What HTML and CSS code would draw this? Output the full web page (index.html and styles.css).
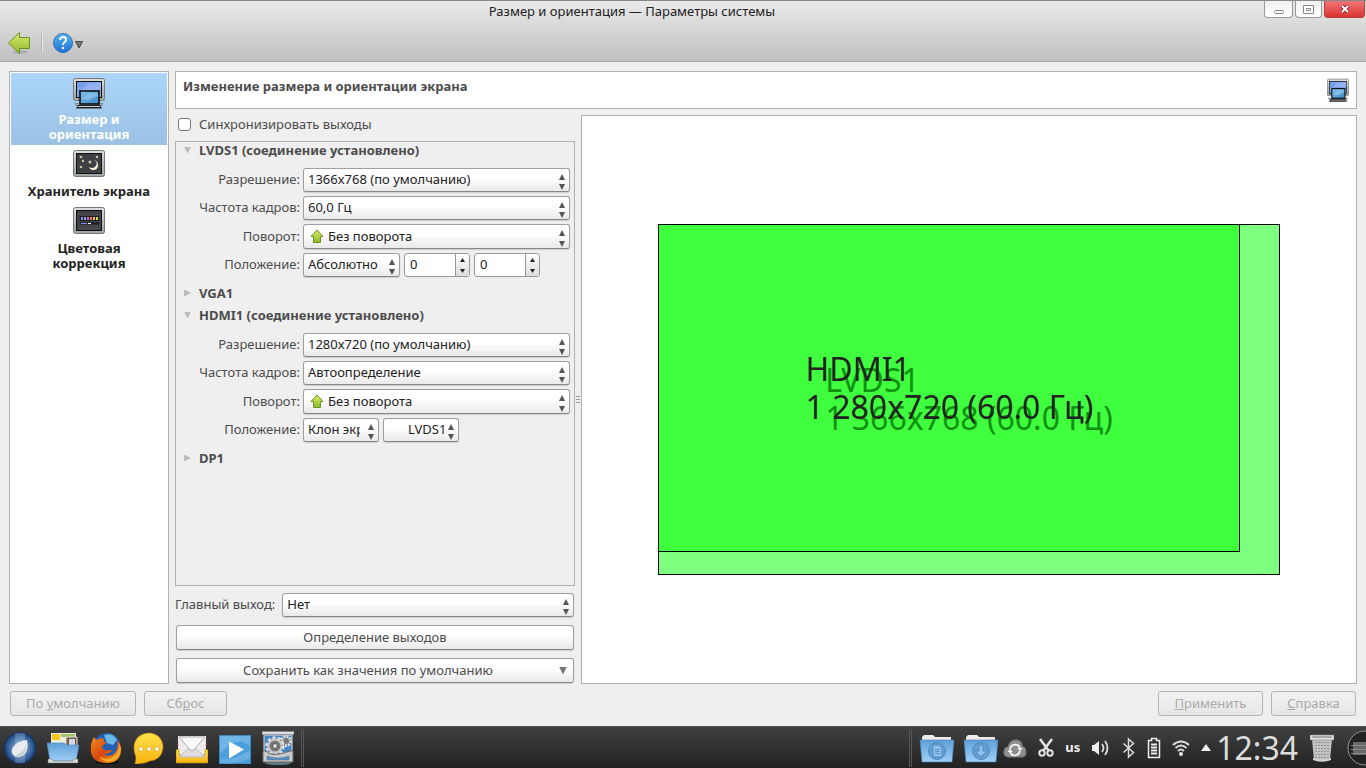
FILE: index.html
```html
<!DOCTYPE html>
<html lang="ru">

<head>
    <meta charset="utf-8">
    <title>Размер и ориентация — Параметры системы</title>
    <link rel="stylesheet" href="styles.css">
</head>

<body>

    <svg class="defs" aria-hidden="true">
        <defs>
            <linearGradient id="silver" x2="0" y2="1">
                <stop offset="0" stop-color="#dcdfdd" />
                <stop offset="1" stop-color="#9ea2a0" />
            </linearGradient>
            <linearGradient id="screen" x2="1" y2="1">
                <stop offset="0" stop-color="#6f9de9" />
                <stop offset="1" stop-color="#8fb4f4" />
            </linearGradient>
            <linearGradient id="screen2" x2="1" y2="1">
                <stop offset="0" stop-color="#7fc1ee" />
                <stop offset="1" stop-color="#3f86c4" />
            </linearGradient>
            <linearGradient id="green" x2="0" y2="1">
                <stop offset="0" stop-color="#dcec70" />
                <stop offset="1" stop-color="#8fb72c" />
            </linearGradient>
            <linearGradient id="blue" x2="0" y2="1">
                <stop offset="0" stop-color="#5f9fd6" />
                <stop offset="1" stop-color="#a0d0f8" />
            </linearGradient>
            <linearGradient id="help" x2="0" y2="1">
                <stop offset="0" stop-color="#58b7ee" />
                <stop offset="1" stop-color="#1f6fd4" />
            </linearGradient>
            <linearGradient id="yellow" x2="0" y2="1">
                <stop offset="0" stop-color="#ffe14a" />
                <stop offset="1" stop-color="#f7b211" />
            </linearGradient>
            <linearGradient id="fox" x2="1" y2="1">
                <stop offset="0" stop-color="#f58a1c" />
                <stop offset=".5" stop-color="#d9480f" />
                <stop offset="1" stop-color="#f9a51e" />
            </linearGradient>
            <radialGradient id="orb">
                <stop offset="0" stop-color="#8eb1d8" />
                <stop offset=".6" stop-color="#4d78ad" />
                <stop offset="1" stop-color="#16407a" />
            </radialGradient>
            <symbol id="display" viewBox="0 0 32 32">
                <rect x=".5" y="1.500" width="31" height="22" rx="2" fill="url(#silver)" stroke="#777" />
                <rect x="3.500" y="4.500" width="25" height="16" fill="url(#screen)" stroke="#111" />
                <path d="M5 17L15 6H28V12z" fill="#a9b9f4" opacity=".5" />
                <path d="M2 26.500h28l-1 2H3z" fill="#aaa" stroke="#555" stroke-width=".5" />
                <rect x="7" y="14" width="19" height="13" fill="url(#screen2)" stroke="#111" stroke-width="1.600" />
                <path d="M8 22l8-6h9v3l-9 4z" fill="#9ad6f6" opacity=".5" />
                <path d="M5 28h22l2 3.500H3z" fill="#222" />
                <path d="M5 29.500h22" stroke="#ccc" />
            </symbol>
            <symbol id="up-arrow" viewBox="0 0 14 15">
                <path d="M7 1l6 6.500h-2.500v6h-7v-6H1z" fill="url(#green)" stroke="#689522" stroke-linejoin="round" />
            </symbol>
            <symbol id="folder" viewBox="0 0 36 32">
                <path d="M3 9V5l2-2h9l2 2h16v6H3z" fill="#eeebe9" />
                <path d="M1 8h34l-2 22H3z" fill="url(#blue)" stroke="#4380b5" stroke-width=".6" />
                <circle cx="18" cy="19" r="8.500" fill="#659fd0" stroke="#4f8bc0" />
            </symbol>
        </defs>
    </svg>

    <div class="window">
        <header class="window-head">
            <div class="titlebar">
                <div class="title">Размер и ориентация — Параметры системы</div>
                <div class="window-buttons">
                    <button class="wb-min" aria-label="Свернуть"><svg width="10" height="4" viewBox="0 0 10 4"><rect x=".5" y=".5" width="9" height="3" rx="1" fill="#fff" stroke="#888" /></svg></button>
                    <button class="wb-max" aria-label="Развернуть"><svg width="11" height="9" viewBox="0 0 11 9"><path d="M.5.500h10v8H.5zM3.500 3.500h4v2h-4z" fill="#fff" stroke="#888" /></svg></button>
                    <button class="wb-close" aria-label="Закрыть"><svg width="10" height="10" viewBox="0 0 10 10"><path d="M2 2l6 6M8 2L2 8" stroke="#8e2626" stroke-width="4" /><path d="M2 2l6 6M8 2L2 8" stroke="#fff" stroke-width="2" /></svg></button>
                </div>
            </div>
            <div class="toolbar">
                <button aria-label="Назад">
                    <svg width="24" height="24" viewBox="0 0 24 24"><ellipse cx="13" cy="21" rx="8" ry="2" fill="#999" opacity=".5" /><path d="M1.500 12L12.500 1.500V6.500H22.500V17.500H12.500V22.500z" fill="url(#green)" stroke="#689522" stroke-linejoin="round" /></svg>
                </button>
                <span class="toolbar-sep"></span>
                <button class="help" aria-label="Справка">
                    <svg width="20" height="20" viewBox="0 0 20 20"><circle cx="10" cy="10" r="9.500" fill="url(#help)" stroke="#2c70b4" /><path d="M7 7q.3-3 3.200-3 2.900.2 2.800 2.700 0 1.700-1.700 2.700-1.300.9-1.300 2.600" fill="none" stroke="#fff" stroke-width="1.800" /><circle cx="10" cy="15" r="1.300" fill="#fff" /></svg>
                    <svg class="drop" width="8" height="8" viewBox="0 0 8 8"><path d="M.5.500h7L4 7z" fill="#777" stroke="#444" /></svg>
                </button>
            </div>
        </header>

        <main class="content">
            <nav class="sidebar">
                <a href="#size" class="active">
                    <svg width="32" height="32"><use href="#display" /></svg>
                    Размер и ориентация
                </a>
                <a href="#saver">
                    <svg width="32" height="32" viewBox="0 0 32 32">
                        <rect x=".5" y="1.500" width="31" height="26" rx="2" fill="url(#silver)" stroke="#777" />
                        <rect x="3.500" y="4.500" width="25" height="20" fill="#3e4044" stroke="#111" />
                        <path d="M21 11q5 3 1 7-3 2-6 0 1 3 4 3 5 0 5-5 0-4-4-5z" fill="#fdf8e0" />
                        <g fill="#c9c4a4"><circle cx="8" cy="8" r="1.300" /><circle cx="24" cy="8" r="1.300" /><circle cx="10" cy="12" r="1.200" /><circle cx="17" cy="13" r="1.500" /><circle cx="8" cy="18" r="1.300" /></g>
                    </svg>
                    Хранитель экрана
                </a>
                <a href="#gamma">
                    <svg width="32" height="32" viewBox="0 0 32 32">
                        <rect x=".5" y="1.500" width="31" height="26" rx="2" fill="url(#silver)" stroke="#777" />
                        <rect x="3.500" y="4.500" width="25" height="20" fill="#3e4044" stroke="#111" />
                        <path d="M5 8h22M5 20h22M5 22.500h22" stroke="#55575c" stroke-dasharray="2 1" />
                        <path d="M7 10h19v5H7z" fill="#1c1c20" />
                        <path d="M8 11h2v3H8z" fill="#8a8ff0" /><path d="M11 11h2v3h-2z" fill="#8ad" /><path d="M14 11h2v3h-2z" fill="#c86fe6" /><path d="M17 11h2v3h-2z" fill="#f58138" /><path d="M20 11h2v3h-2z" fill="#fb3" /><path d="M23 11h2v3h-2z" fill="#cde04a" />
                        <path d="M7 17.500h19" stroke="#18181b" stroke-width="2" /><path d="M8 17.500h6" stroke="#88f" /><path d="M15 17.500h3" stroke="#fff" />
                    </svg>
                    Цветовая коррекция
                </a>
            </nav>

            <div class="page">
                <div class="page-head">
                    <h1>Изменение размера и ориентации экрана</h1>
                    <svg width="22" height="24" viewBox="0 0 32 32" preserveAspectRatio="none"><use href="#display" width="32" height="32" /></svg>
                </div>

                <div class="page-body">
                    <form class="settings">
                        <label class="sync"><input type="checkbox"> Синхронизировать выходы</label>

                        <div class="outputs">
                            <section>
                                <h2 class="open">LVDS1 (соединение установлено)</h2>
                                <div class="output-form">
                                    <label for="lvds-res">Разрешение:</label>
                                    <div class="combo"><select id="lvds-res"><option>1366x768 (по умолчанию)</option></select></div>
                                    <label for="lvds-rate">Частота кадров:</label>
                                    <div class="combo"><select id="lvds-rate"><option>60,0 Гц</option></select></div>
                                    <label for="lvds-rot">Поворот:</label>
                                    <div class="combo rotation"><select id="lvds-rot"><option>Без поворота</option></select><svg width="14" height="15"><use href="#up-arrow" /></svg></div>
                                    <label for="lvds-pos">Положение:</label>
                                    <div class="position">
                                        <div class="combo absolute"><select id="lvds-pos"><option>Абсолютно</option></select></div>
                                        <div class="spin"><input type="text" value="0" aria-label="X"><button type="button" aria-label="Изменить X"></button></div>
                                        <div class="spin"><input type="text" value="0" aria-label="Y"><button type="button" aria-label="Изменить Y"></button></div>
                                    </div>
                                </div>
                            </section>
                            <section>
                                <h2>VGA1</h2>
                            </section>
                            <section>
                                <h2 class="open">HDMI1 (соединение установлено)</h2>
                                <div class="output-form">
                                    <label for="hdmi-res">Разрешение:</label>
                                    <div class="combo"><select id="hdmi-res"><option>1280x720 (по умолчанию)</option></select></div>
                                    <label for="hdmi-rate">Частота кадров:</label>
                                    <div class="combo"><select id="hdmi-rate"><option>Автоопределение</option></select></div>
                                    <label for="hdmi-rot">Поворот:</label>
                                    <div class="combo rotation"><select id="hdmi-rot"><option>Без поворота</option></select><svg width="14" height="15"><use href="#up-arrow" /></svg></div>
                                    <label for="hdmi-pos">Положение:</label>
                                    <div class="position">
                                        <div class="combo clone"><select id="hdmi-pos"><option>Клон экрана</option></select></div>
                                        <div class="combo clone source"><select aria-label="Исходный экран"><option>LVDS1</option></select></div>
                                    </div>
                                </div>
                            </section>
                            <section>
                                <h2>DP1</h2>
                            </section>
                        </div>

                        <div class="primary">
                            <label for="primary">Главный выход:</label>
                            <div class="combo"><select id="primary"><option>Нет</option></select></div>
                        </div>
                        <button type="button" class="btn">Определение выходов</button>
                        <button type="button" class="btn btn-menu"><span>Сохранить как значения по умолчанию</span></button>
                    </form>

                    <div class="splitter"></div>

                    <div class="preview">
                        <div class="screen">
                            <div>LVDS1<br>1 366x768 (60.0 Гц)</div>
                            <div class="screen screen-clone">
                                <div>HDMI1<br>1 280x720 (60.0 Гц)</div>
                            </div>
                        </div>
                    </div>
                </div>
            </div>
        </main>

        <footer class="actions">
            <button class="btn defaults" disabled>По <u>у</u>молчанию</button>
            <button class="btn reset" disabled>Сб<u>р</u>ос</button>
            <span class="spacer"></span>
            <button class="btn apply" disabled><u>П</u>рименить</button>
            <button class="btn reference" disabled><u>С</u>правка</button>
        </footer>
    </div>

    <div class="panel">
        <div class="launchers">
            <!-- menu -->
            <svg width="32" height="32" viewBox="0 0 32 32"><circle cx="16" cy="16" r="15.500" fill="url(#orb)" stroke="#123463" /><path d="M11 1h10v30H11z" fill="#c9dcf2" opacity=".25" /><path d="M23 8q2 9-2 14-5 5-11 2-4-4-1-9 4-6 14-7z" fill="#e9ecee" /><path d="M22 13q-3 8-12 11 6 2 10-2 3-4 2-9z" fill="#cdd2d8" /></svg>
            <!-- files -->
            <svg width="32" height="32" viewBox="0 0 32 32"><path d="M4 1h25v12H4z" fill="#e9efd9" /><path d="M5 2h8v6H5z" fill="#f6c61d" /><path d="M14 2h14v3H14z" fill="#9fc46a" /><path d="M19 5h11v10H19z" fill="#7c5a45" stroke="#ddd" /><path d="M22 7h6v7h-6z" fill="#ccd7e3" /><path d="M0 11h17l3 2h12l-3 16H3z" fill="url(#blue)" stroke="#4b8ecb" stroke-width=".6" /><path d="M1 27h5v2h20v-2h5v4H1z" fill="#d5d7d8" stroke="#777" stroke-width=".5" /></svg>
            <!-- browser -->
            <svg width="32" height="32" viewBox="0 0 32 32"><ellipse cx="17" cy="30" rx="12" ry="2" fill="#111" /><circle cx="17" cy="14" r="13" fill="#2460ad" /><path d="M14 3q9-3 13 5l-4 5-6-2z" fill="#67b9e8" /><path d="M4 5q1 2 3 3 4-3 7-1-1 3 3 4-4 1-5 4 1 4 6 3 4 0 4 1-4 4-9 3 6 4 12-1 4-5 2-13 5 5 4 12-2 11-14 11Q3 31 1 20 0 11 4 5z" fill="url(#fox)" /><path d="M28 8q4 12-7 18-7 2-12-2 5 8 14 5 8-4 8-13z" fill="#fbb92b" opacity=".8" /></svg>
            <!-- chat -->
            <svg width="32" height="32" viewBox="0 0 32 32"><path d="M16 1q13 1 14 14-1 13-14 14-2 2-14 3 1-2 1-7Q1 20 1 15 2 2 16 1z" fill="url(#yellow)" stroke="#e3a010" stroke-width=".6" /><g fill="#fff" stroke="#d9a01a" stroke-width=".8"><circle cx="8" cy="17" r="2.300" /><circle cx="16" cy="17" r="2.300" /><circle cx="24" cy="17" r="2.300" /></g></svg>
            <!-- mail -->
            <svg width="32" height="32" viewBox="0 0 32 32"><path d="M2 4h28v20H2z" fill="#ededee" /><path d="M2 14v-5M30 14v-5" stroke="#d66" stroke-dasharray="2 2" /><path d="M0 18l3-1v6h26v-6l3 1v13H0z" fill="url(#yellow)" stroke="#b98817" stroke-width=".6" /><path d="M3 25l10-9h6l10 9z" fill="#dedede" stroke="#bbb" /><path d="M3 5l11 13q2 2 4 0L29 5z" fill="#fafafa" stroke="#aaa" /></svg>
            <!-- player -->
            <svg width="32" height="32" viewBox="0 0 32 32"><rect x=".5" y="3.500" width="31" height="28" fill="#4ba0dc" stroke="#3a89c2" /><path d="M1 4h30v10Q18 2 1 22z" fill="#91caee" opacity=".5" /><path d="M1 27q14 2 30-9v8Q18 33 1 31z" fill="#85c0e7" opacity=".5" /><path d="M10 9.500l15 8-15 9z" fill="#fff" /></svg>
            <!-- settings -->
            <svg class="running" width="32" height="34" viewBox="0 0 32 34"><ellipse cx="16" cy="32" rx="13" ry="2" fill="#7fb8b8" opacity=".6" /><path d="M2 4h28v18H2z" fill="#4586c9" stroke="#ddd" /><path d="M0 .5h32v3H0z" fill="#ddd" stroke="#888" stroke-width=".6" /><circle cx="24" cy="10" r="4.500" fill="#777" stroke="#ddd" stroke-width="3" stroke-dasharray="2 1" /><circle cx="13" cy="15" r="8" fill="#999" stroke="#ddd" stroke-width="3.500" stroke-dasharray="3 2" /><circle cx="13" cy="15" r="6.500" fill="#777" stroke="#ccc" stroke-width="2" /><circle cx="13" cy="15" r="2.500" fill="#ddd" stroke="#555" /><path d="M1 20h3q5 7 24 0h3v11H1z" fill="#c8cacb" stroke="#666" /><path d="M5 25q11 4 22 0v4H5z" fill="#4d8dce" stroke="#777" stroke-width=".6" /></svg>
        </div>
        <span class="panel-sep"></span>
        <span class="spacer"></span>
        <span class="panel-sep"></span>

        <div class="folders">
            <svg width="36" height="32" viewBox="0 0 36 32"><use href="#folder" /><path d="M14 13h6l3 3v9h-9z" fill="#8fc2ea" stroke="#4f8bc0" /><path d="M16 17.500h5M16 19.500h5M16 21.500h5" stroke="#5a96ca" /></svg>
            <svg width="36" height="32" viewBox="0 0 36 32"><use href="#folder" /><path d="M16 13h4v6h4l-6 6-6-6h4z" fill="#8fc2ea" stroke="#4f8bc0" /></svg>
        </div>

        <div class="tray">
            <!-- sync -->
            <svg width="24" height="24" viewBox="0 0 24 24"><path d="M5 21q-5-1-4-6 0-4 4-4 2-8 9-7 5 1 5 6 4 1 4 6 0 5-4 5z" fill="#8f8f8f" stroke="#777" /><path d="M7 13q1-4 5-4.500 4 0 5 4M17 15q-1 4-5 4.500-4 0-5-4" fill="none" stroke="#fff" stroke-width="1.600" /><path d="M14.500 12h5L17 15zM4.500 16h5L7 13z" fill="#fff" /></svg>
            <!-- clipboard -->
            <svg width="16" height="20" viewBox="0 0 16 20"><path d="M2 1l9 12M14 1L5 13" stroke="#e3e3e3" stroke-width="2.500" /><g fill="none" stroke="#e3e3e3" stroke-width="2"><circle cx="4" cy="15" r="2.700" /><circle cx="12" cy="15" r="2.700" /></g></svg>
            <span class="layout">us</span>
            <!-- volume -->
            <svg width="20" height="20" viewBox="0 0 20 20"><path d="M1 7h2l5-4v14l-5-4H1z" fill="#eee" /><path d="M11 6q3 4 0 8M14 3q5 7 0 14" fill="none" stroke="#ddd" stroke-width="1.800" /></svg>
            <!-- bluetooth -->
            <svg width="14" height="22" viewBox="0 0 14 22"><path d="M1.500 6.500l10 9-5 4.500V2l5 4.500-10 9" fill="none" stroke="#ddd" stroke-width="1.500" /></svg>
            <!-- battery -->
            <svg width="14" height="22" viewBox="0 0 14 22"><path d="M1.500 3.500h3v-2h5v2h3v17h-11z" fill="#333" stroke="#eee" stroke-width="1.500" /><path d="M4 7.500h6M4 10.500h6M4 13.500h6M4 16.500h6" stroke="#eee" stroke-width="2" /></svg>
            <!-- network -->
            <svg width="18" height="18" viewBox="0 0 18 18"><g fill="none" stroke="#ddd" stroke-width="1.800"><path d="M1 6q8-7 16 0M3.500 9q5.500-5 11 0M6 12q3-3 6 0" /></g><circle cx="9" cy="15" r="2" fill="#eee" /></svg>
            <svg width="10" height="7" viewBox="0 0 10 7"><path d="M5 0l5 7H0z" fill="#eee" /></svg>
        </div>
        <time class="clock">12:34</time>
        <!-- trash -->
        <svg class="trash" width="24" height="28" viewBox="0 0 24 28"><path d="M2 5h20l-2 21q-8 3-16 0z" fill="#c2c2c2" /><path d="M6 8v17M9 8v18M12 8v18M15 8v18M18 8v17" stroke="#666" stroke-dasharray="1 2" /><path d="M3 24q9 3 18 0v2q-9 3-18 0z" fill="#d5d5d5" /><path d="M0 1h24v5H0z" fill="#dedede" stroke="#888" stroke-width=".6" /><path d="M2 3h20" stroke="#777" /></svg>
        <svg class="cashew" width="19" height="36" viewBox="0 0 19 36"><circle cx="18" cy="18" r="17" fill="#222" stroke="#999" /><path d="M6 12h14v13H6z" fill="#6a6a6a" /><path d="M4 15.500h16M4 19.500h16M4 23.500h16" stroke="#8a8a8a" /></svg>
    </div>

</body>

</html>
```
FILE: styles.css
```css
* {
    box-sizing: border-box;
}

body {
    margin: 0px;
    min-height: 100vh;
    display: flex;
    flex-direction: column;
    background: #efefef;
    color: #4c4c4c;
    font-family: "Noto Sans", "Open Sans", sans-serif;
    font-size: 13px;
    line-height: 15px;
}

button,
input,
select {
    margin: 0px;
    padding: 0px;
    font: inherit;
    color: inherit;
}

svg {
    display: block;
    flex: none;
}

h1,
h2 {
    margin: 0px;
    font-size: 13px;
}

.defs {
    position: absolute;
    width: 0px;
    height: 0px;
}

.window {
    flex: 1;
    display: flex;
    flex-direction: column;
}

.spacer {
    flex: 1;
}

/* title and toolbar */

.window-head {
    height: 62px;
    border-top: 1px solid #888;
    border-bottom: 1px solid #aaa;
    background: linear-gradient(#eaeaea, #c0c0c0);
}

.titlebar {
    display: flex;
    height: 25px;
}

.title {
    flex: 1;
    color: #222;
    line-height: 20px;
    text-align: center;
}

.window-buttons {
    display: flex;
    align-items: flex-start;
    gap: 2px;
    padding-right: 1px;
}

.window-buttons button {
    display: flex;
    align-items: center;
    justify-content: center;
    width: 27px;
    height: 17px;
    border: 1px solid #999;
    border-top: none;
    border-radius: 0px 0px 4px 4px;
    background: linear-gradient(#f0f0f0, #fff);
}

.window-buttons .wb-min {
    width: 29px;
    padding-top: 6px;
}

.window-buttons .wb-close {
    width: 41px;
    border-color: #b04040;
    background: linear-gradient(#ee7777, #dd3333);
}

.toolbar {
    display: flex;
    align-items: center;
    height: 34px;
    padding-left: 7px;
}

.toolbar button {
    display: flex;
    align-items: center;
    gap: 2px;
    border: none;
    background: none;
}

.toolbar .drop {
    margin-top: 4px;
}

.toolbar-sep {
    width: 2px;
    height: 20px;
    margin: 0px 10px;
    border-left: 1px solid #b5b5b5;
    border-right: 1px solid #e8e8e8;
}

/* content */

.content {
    flex: 1;
    display: flex;
    gap: 6px;
    padding: 9px 9px 0px;
}

.sidebar {
    width: 160px;
    padding: 1px;
    border: 1px solid #b1b1b1;
    background: #fff;
}

.sidebar a {
    display: flex;
    flex-direction: column;
    align-items: center;
    gap: 3px;
    padding: 4px 16px 3px;
    color: #222;
    font-weight: bold;
    text-align: center;
    text-decoration: none;
}

.sidebar a.active {
    padding: 4px 30px 3px;
    background: linear-gradient(#abd6f9, #9bc1e3);
    color: #fff;
}

.page {
    flex: 1;
    display: flex;
    flex-direction: column;
    gap: 6px;
}

.page-head {
    display: flex;
    justify-content: space-between;
    height: 38px;
    padding: 6px 7px;
    border: 1px solid #b1b1b1;
    background: #fff;
}

.page-head h1 {
    line-height: 16px;
}

.page-body {
    flex: 1;
    display: flex;
}

.settings {
    display: flex;
    flex-direction: column;
    width: 400px;
}

.sync {
    display: flex;
    gap: 8px;
    height: 26px;
    padding: 2px 3px;
}

.sync input {
    appearance: none;
    width: 13px;
    height: 13px;
    margin: 1px 0px;
    border: 1px solid #777;
    border-radius: 3px;
    background: #fff;
}

.outputs {
    flex: 1;
    border: 1px solid #b1b1b1;
}

.outputs section:first-child {
    margin-top: -3px;
}

.outputs h2 {
    display: flex;
    align-items: center;
    gap: 8px;
    padding-left: 8px;
    line-height: 22px;
}

.outputs h2::before {
    content: "";
    width: 7px;
    height: 7px;
    background: #bbb;
    clip-path: polygon(0 0, 100% 50%, 0 100%);
}

.outputs h2.open::before {
    clip-path: polygon(0 0, 100% 0, 50% 100%);
}

.output-form {
    display: grid;
    grid-template-columns: 120px 1fr;
    gap: 4px 3px;
    padding: 7px 4px 5px;
}

.output-form label {
    align-self: center;
    padding-bottom: 1px;
    text-align: right;
}

/* drop-down with a pair of arrows */

.combo {
    position: relative;
    height: 24px;
    border: 1px solid #a0a0a0;
    border-bottom-color: #888;
    border-radius: 3px;
    background: linear-gradient(#fff 40%, #e9e9e9);
    box-shadow: 0px 1px 1px #ccc;
}

.combo select {
    display: block;
    width: 100%;
    height: 100%;
    padding: 0px 18px 1px 4px;
    appearance: none;
    border: none;
    background: none;
    color: #222;
    text-overflow: clip;
}

.combo::before,
.combo::after,
.spin button::before,
.spin button::after {
    content: "";
    position: absolute;
    right: 4px;
    width: 6px;
    height: 6px;
    background: #555;
    pointer-events: none;
}

.combo::before {
    top: 5px;
    clip-path: polygon(50% 0, 100% 100%, 0 100%);
}

.combo::after {
    bottom: 1px;
    clip-path: polygon(0 0, 100% 0, 50% 100%);
}

.rotation {
    height: 25px;
}

.rotation select {
    padding-left: 24px;
}

.rotation svg {
    position: absolute;
    left: 6px;
    top: 4px;
    pointer-events: none;
}

.position {
    display: flex;
    gap: 4px;
}

.absolute {
    width: 97px;
}

.clone {
    width: 76px;
}

.source select {
    padding-left: 24px;
    padding-right: 14px;
}

.spin {
    display: flex;
    width: 66px;
    height: 24px;
    overflow: hidden;
    border: 1px solid #999;
    border-radius: 3px;
    background: #fff;
}

.spin input {
    flex: 1;
    min-width: 0px;
    padding: 0px 0px 1px 5px;
    border: none;
    background: none;
    color: #222;
}

.spin button {
    position: relative;
    width: 14px;
    border: none;
    border-left: 1px solid #999;
    background: linear-gradient(#fff, #ddd);
}

.spin button::before,
.spin button::after {
    right: 4px;
    width: 5px;
    height: 4px;
    background: #222;
}

.spin button::before {
    top: 4px;
    clip-path: polygon(50% 0, 100% 100%, 0 100%);
}

.spin button::after {
    bottom: 3px;
    clip-path: polygon(0 0, 100% 0, 50% 100%);
}

.primary {
    display: flex;
    gap: 7px;
    margin: 7px 1px 8px 0px;
}

.primary label {
    line-height: 22px;
}

.primary .combo {
    flex: 1;
}

.btn {
    height: 25px;
    border: 1px solid #a0a0a0;
    border-bottom-color: #888;
    border-radius: 3px;
    background: linear-gradient(#fff 40%, #e9e9e9);
    box-shadow: 0px 1px 1px #ccc;
}

.settings .btn {
    margin: 0px 1px 8px;
}

.settings .btn-menu {
    display: flex;
    align-items: center;
    margin-bottom: 1px;
    padding-right: 6px;
}

.btn-menu span {
    flex: 1;
}

.btn-menu::after {
    content: "";
    width: 8px;
    height: 8px;
    background: #777;
    clip-path: polygon(0 0, 100% 0, 50% 100%);
}

.splitter {
    width: 6px;
    align-self: center;
    height: 9px;
    border: 1px solid #efefef;
    background: repeating-linear-gradient(#999 0px, #999 1px, #efefef 1px, #efefef 3px);
}

/* monitors layout */

.preview {
    flex: 1;
    display: grid;
    place-items: center;
    border: 1px solid #b1b1b1;
    background: #fff;
}

.screen {
    position: relative;
    display: grid;
    place-content: center;
    box-sizing: content-box;
    width: 80%;
    aspect-ratio: 1366 / 768;
    border: 1px solid #000;
    background: rgba(0, 255, 0, 0.5);
    color: #222;
    font-size: 32px;
    line-height: 38px;
}

/* the clone lies over the top left corner of its source */
.screen-clone {
    position: absolute;
    left: -1px;
    top: -1px;
    box-sizing: border-box;
    width: 94%;
}

/* dialog buttons */

.actions {
    display: flex;
    gap: 8px;
    padding: 7px 10px 10px;
}

.btn:disabled {
    border-color: #b5b5b5;
    background: linear-gradient(#f2f2f2, #e6e6e6);
    box-shadow: none;
    color: #aaa;
}

.defaults {
    width: 126px;
}

.reset {
    width: 83px;
}

.apply {
    width: 105px;
}

.reference {
    width: 85px;
}

/* desktop panel */

.panel {
    display: flex;
    align-items: center;
    height: 42px;
    padding-left: 4px;
    border-top: 1px solid #555;
    background: linear-gradient(#404040, #222);
    color: #eee;
}

.launchers {
    display: flex;
    align-items: center;
    gap: 11px;
}

.panel-sep {
    width: 3px;
    height: 38px;
    margin: 0px 7px;
    border-left: 1px solid #555;
    border-right: 1px solid #555;
}

.folders {
    display: flex;
    gap: 8px;
}

.tray {
    display: flex;
    align-items: center;
    gap: 11px;
    margin-left: 4px;
}

.layout {
    font-weight: bold;
}

.clock {
    margin: 0px 12px 0px 5px;
    color: #ddd;
    font-size: 32px;
    line-height: 40px;
}

.cashew {
    margin-left: 13px;
}
```
